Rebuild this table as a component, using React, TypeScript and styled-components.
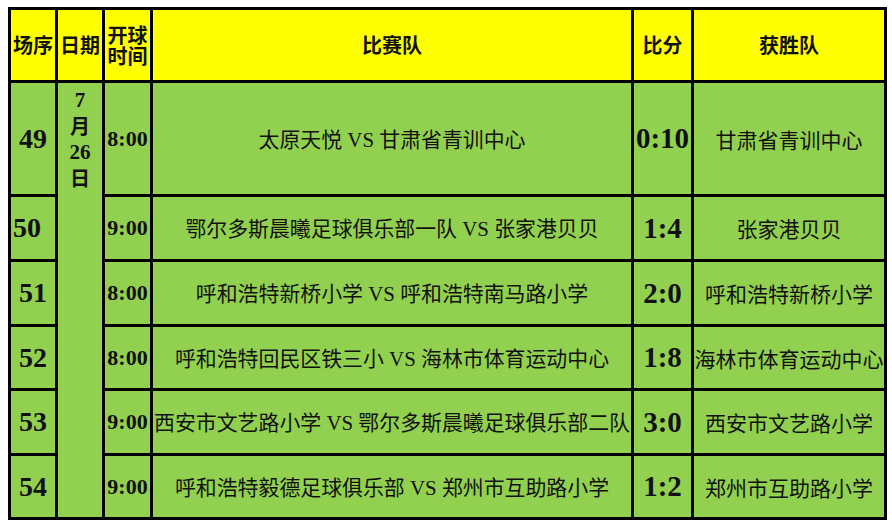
import React from "react";
import styled, { createGlobalStyle } from "styled-components";

const Global = createGlobalStyle`
  html, body { margin: 0; padding: 0; background: #ffffff; }
  body { padding: 7px 0 0 8px; }
`;

const Table = styled.div`
  display: grid;
  grid-template-columns: 44px 44px 45px 478px 57px 190px;
  grid-template-rows: 70px 111px 62px 62px 61px 62px 61px;
  gap: 3px;
  padding: 3px;
  background: #000;
  width: max-content;
  color: #111;
`;

const HeadCell = styled.div`
  background: #ffff00;
  display: flex;
  flex-direction: column;
  align-items: center;
  justify-content: center;
  text-align: center;
  font-family: "Noto Sans CJK SC", sans-serif;
  font-weight: 700;
  font-size: 20px;
  line-height: 22px;
  white-space: nowrap;
`;

const HeadLine = styled.span`
  display: block;
  height: 21px;
  line-height: 21px;
`;

const Cell = styled.div<{ $align?: "left" | "center" }>`
  background: #92d050;
  display: flex;
  align-items: center;
  justify-content: ${(p) => (p.$align === "left" ? "flex-start" : "center")};
  white-space: nowrap;
  overflow: visible;
`;

const NumCell = styled(Cell)`
  font-family: "Liberation Serif", "Times New Roman", serif;
  font-weight: 700;
  font-size: 28px;
  padding-left: ${(p) => (p.$align === "left" ? "2px" : "0")};
`;

const TimeCell = styled(Cell)`
  font-family: "Liberation Serif", "Times New Roman", serif;
  font-weight: 700;
  font-size: 22px;
`;

const ScoreCell = styled(Cell)`
  font-family: "Liberation Serif", "Times New Roman", serif;
  font-weight: 700;
  font-size: 29px;
`;

const TextCell = styled(Cell)`
  font-family: "Noto Sans CJK SC", sans-serif;
  font-size: 21px;
  line-height: 24px;
`;

const MatchCell = styled(TextCell)`
  font-size: 20.9px;
`;

const MatchText = styled.span`
  white-space: pre;
`;

const Vs = styled.span`
  font-family: "Liberation Serif", "Times New Roman", serif;
`;

const DateCell = styled.div`
  background: #92d050;
  grid-column: 2;
  grid-row: 2 / span 6;
  display: flex;
  flex-direction: column;
  align-items: center;
  padding-top: 4px;
  font-weight: 700;
  font-size: 20px;
  line-height: 26px;
`;

const DateNum = styled.span`
  font-family: "Liberation Serif", "Times New Roman", serif;
  font-size: 21px;
`;

const DateHan = styled.span`
  font-family: "Noto Sans CJK SC", sans-serif;
`;

type Row = {
  no: string;
  align?: "left" | "center";
  time: string;
  a: string;
  b: string;
  score: string;
  winner: string;
};

const rows: Row[] = [
  { no: "49", time: "8:00", a: "太原天悦", b: "甘肃省青训中心", score: "0:10", winner: "甘肃省青训中心" },
  { no: "50", align: "left", time: "9:00", a: "鄂尔多斯晨曦足球俱乐部一队", b: "张家港贝贝", score: "1:4", winner: "张家港贝贝" },
  { no: "51", time: "8:00", a: "呼和浩特新桥小学", b: "呼和浩特南马路小学", score: "2:0", winner: "呼和浩特新桥小学" },
  { no: "52", time: "8:00", a: "呼和浩特回民区铁三小", b: "海林市体育运动中心", score: "1:8", winner: "海林市体育运动中心" },
  { no: "53", time: "9:00", a: "西安市文艺路小学", b: "鄂尔多斯晨曦足球俱乐部二队", score: "3:0", winner: "西安市文艺路小学" },
  { no: "54", time: "9:00", a: "呼和浩特毅德足球俱乐部", b: "郑州市互助路小学", score: "1:2", winner: "郑州市互助路小学" },
];

export default function App() {
  return (
    <>
      <Global />
      <Table>
        <HeadCell>场序</HeadCell>
        <HeadCell>日期</HeadCell>
        <HeadCell>
          <HeadLine>开球</HeadLine>
          <HeadLine>时间</HeadLine>
        </HeadCell>
        <HeadCell>比赛队</HeadCell>
        <HeadCell>比分</HeadCell>
        <HeadCell>获胜队</HeadCell>
        {rows.map((r, i) => (
          <React.Fragment key={r.no}>
            <NumCell $align={r.align}>{r.no}</NumCell>
            {i === 0 && (
              <DateCell>
                <DateNum>7</DateNum>
                <DateHan>月</DateHan>
                <DateNum>26</DateNum>
                <DateHan>日</DateHan>
              </DateCell>
            )}
            <TimeCell>{r.time}</TimeCell>
            <MatchCell>
              <MatchText>
                {r.a}
                <Vs>{" VS "}</Vs>
                {r.b}
              </MatchText>
            </MatchCell>
            <ScoreCell>{r.score}</ScoreCell>
            <TextCell>{r.winner}</TextCell>
          </React.Fragment>
        ))}
      </Table>
    </>
  );
}
